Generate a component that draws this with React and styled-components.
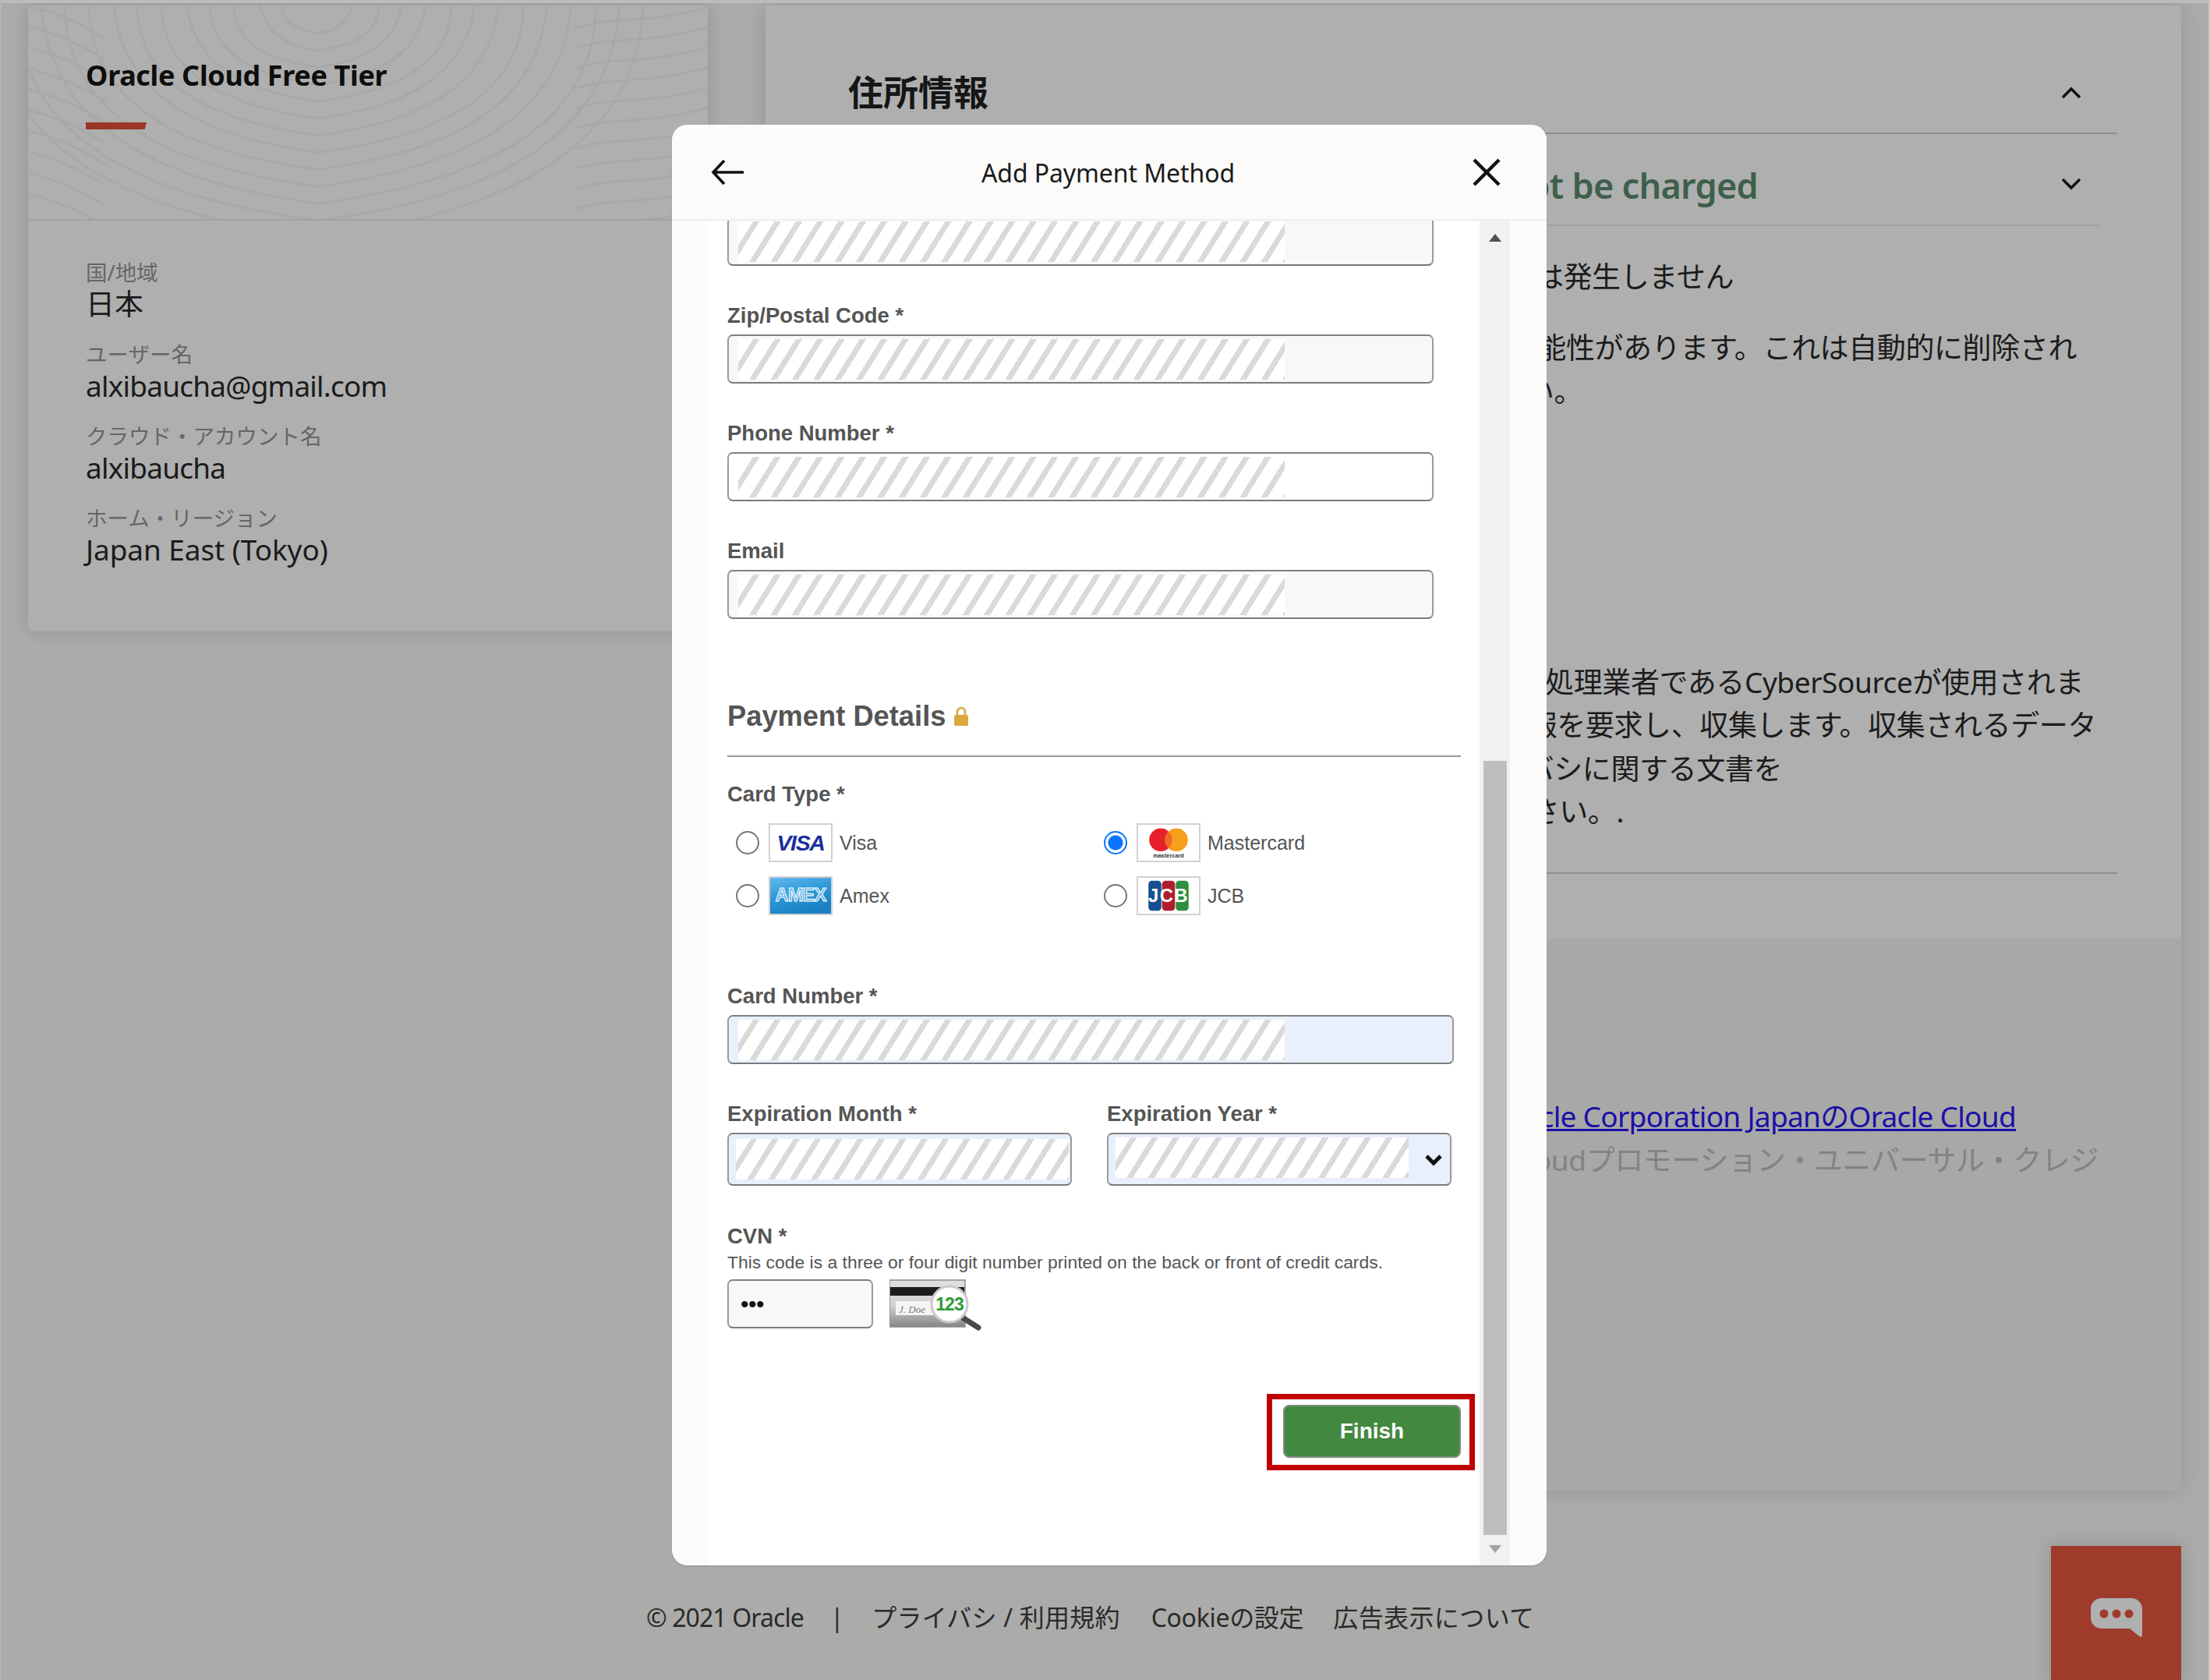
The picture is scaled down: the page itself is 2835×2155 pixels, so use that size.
import React from "react";
import styled, { createGlobalStyle } from "styled-components";

const Global = createGlobalStyle`
  html, body { margin: 0; padding: 0; background: #ababa9; }
  * { box-sizing: border-box; }
`;

const UI = `"Noto Sans", "Noto Sans CJK JP", sans-serif`;
const FORM = `"Liberation Sans", Arial, sans-serif`;
const CJK = `"Noto Sans", "Noto Sans CJK JP", sans-serif`;

const Page = styled.div`
  position: relative;
  width: 2835px;
  height: 2155px;
  overflow: hidden;
  background: #ababa9;
  border-top: 4px solid #bcbcbc;
  border-left: 2px solid #b4b4b4;
  border-right: 2px solid #c8c8c8;
  padding: 3px 35px 0 34px;
  font-family: ${UI};
`;
const Main = styled.main`
  display: flex;
  align-items: flex-start;
  gap: 74px;
`;
const LeftCard = styled.aside`
  width: 872px;
  height: 803px;
  flex: none;
  background: #afafaf;
  border-radius: 0 0 6px 6px;
  box-shadow: 0 0 22px rgba(0, 0, 0, 0.14);
`;
const CardHeader = styled.header`
  position: relative;
  height: 276px;
  padding: 62px 0 0 74px;
  border-bottom: 2px solid #a2a2a2;
  overflow: hidden;
`;
const Contours = styled.svg`
  position: absolute;
  inset: 0;
  width: 100%;
  height: 100%;
`;
const CardTitle = styled.h2`
  position: relative;
  margin: 0;
  font-size: 36px;
  line-height: 56px;
  font-weight: 700;
  letter-spacing: -0.35px;
  color: #0e0e0e;
`;
const RedBar = styled.div`
  position: relative;
  width: 78px;
  height: 9px;
  margin-top: 32px;
  background: #9b3727;
  clip-path: polygon(0 0, 100% 0, 97% 100%, 0 100%);
`;
const CardBody = styled.div`
  padding: 50px 0 0 74px;
  display: flex;
  flex-direction: column;
  gap: 24px;
`;
const Info = styled.div`
  display: flex;
  flex-direction: column;
`;
const InfoLabel = styled.span`
  font-size: 27.5px;
  line-height: 33px;
  color: #666;
`;
const InfoValue = styled.span`
  font-size: 37px;
  line-height: 48px;
  color: #1b1b1b;
  letter-spacing: ${(p) => p.$ls}px;
`;

const RightPanel = styled.section`
  width: 1816px;
  flex: none;
  box-shadow: 0 0 24px rgba(0, 0, 0, 0.13);
`;
const Upper = styled.div`
  height: 1197px;
  padding: 0 82px 0 106px;
  background: #afafaf;
`;
const Lower = styled.div`
  height: 708px;
  padding: 200px 82px 0 106px;
  background: #a8a8a6;
`;
const AddressRow = styled.div`
  height: 165px;
  padding: 80px 46px 20px 0;
  display: flex;
  align-items: center;
  justify-content: space-between;
  border-bottom: 2px solid #8f8f8f;
`;
const AddressTitle = styled.h2`
  margin: 0;
  font-size: 45px;
  line-height: 64px;
  font-weight: 700;
  color: #161616;
`;
const ChargeRow = styled.div`
  height: 118px;
  margin-right: 24px;
  padding: 35px 22px 19px 0;
  display: flex;
  align-items: center;
  justify-content: flex-end;
  border-bottom: 2px solid #a0a0a0;
  svg { margin-top: -5px; }
`;
const ChargeTitle = styled.h3`
  margin: 0 389px 0 0;
  font-size: 45px;
  line-height: 64px;
  font-weight: 600;
  white-space: nowrap;
  letter-spacing: -0.7px;
  color: #3e5f4c;
`;
const Para = styled.div`
  margin-top: ${(p) => p.$top}px;
`;
const Line = styled.div`
  font-family: ${CJK};
  font-size: 37px;
  line-height: ${(p) => p.$lh || 55.5}px;
  height: ${(p) => p.$lh || 55.5}px;
  color: ${(p) => p.$color || "#1c1c1c"};
  text-align: right;
  white-space: nowrap;
  letter-spacing: -0.4px;
  padding-right: ${(p) => p.$end}px;
`;
const Rule = styled.div`
  height: 2px;
  margin-top: ${(p) => p.$top}px;
  background: #8f8f8f;
`;
const LinkLine = styled.a`
  display: block;
  height: 56px;
  line-height: 56px;
  text-align: right;
  padding-right: 130px;
  font-size: 37px;
  white-space: nowrap;
  letter-spacing: -0.7px;
  color: #1c0fa8;
  span { text-decoration: underline; }
`;

const Footer = styled.footer`
  height: 200px;
  padding: 125px 0 0 793px;
  display: flex;
  align-items: center;
  font-family: ${CJK};
  font-size: 32px;
  line-height: 48px;
  color: #2a2a2a;
`;
const FootItem = styled.span`
  margin-left: ${(p) => p.$left}px;
  letter-spacing: ${(p) => p.$ls ?? -0.3}px;
  white-space: nowrap;
`;
const ChatButton = styled.button`
  position: absolute;
  left: 2629px;
  top: 1979px;
  width: 167px;
  height: 180px;
  padding: 67px 0 0 0;
  border: 0;
  display: flex;
  justify-content: center;
  align-items: flex-start;
  background: #9f3b2b;
  box-shadow: 0 0 22px rgba(0, 0, 0, 0.16);
`;

/* Modal */
const Modal = styled.div`
  position: absolute;
  left: 860px;
  top: 156px;
  width: 1122px;
  height: 1848px;
  border-radius: 20px;
  background: #fcfbf9;
  overflow: hidden;
  display: flex;
  flex-direction: column;
  box-shadow: 0 1px 2px rgba(0, 0, 0, 0.15);
`;
const ModalHead = styled.header`
  flex: none;
  height: 123px;
  padding: 0 59px 0 50px;
  display: flex;
  align-items: center;
  justify-content: space-between;
  border-bottom: 2px solid #efefee;
  position: relative;
  z-index: 1;
  background: #fcfbf9;
`;
const ModalTitle = styled.h1`
  margin: 2px 0 0;
  font-size: 32px;
  font-weight: 400;
  color: #1a1a1a;
  letter-spacing: -0.1px;
`;
const ModalBody = styled.div`
  flex: 1;
  min-height: 0;
  display: flex;
  padding: 0 47px;
`;
const Frame = styled.div`
  width: 989px;
  flex: none;
  background: #fff;
  overflow: hidden;
  padding-left: 24px;
  font-family: ${FORM};
  color: #555;
`;
const Form = styled.form`
  width: 941px;
  margin-top: -5px;
`;
const Scrollbar = styled.div`
  width: 39px;
  flex: none;
  display: flex;
  flex-direction: column;
  align-items: center;
  background: #f1f1f1;
`;
const ScrollTop = styled.div`
  height: 693px;
  padding-top: 17px;
  display: flex;
  justify-content: center;
  align-items: flex-start;
`;
const Thumb = styled.div`
  width: 30px;
  height: 993px;
  flex: none;
  background: #bebebe;
`;
const ScrollEnd = styled.div`
  flex: 1;
  padding-top: 13px;
  display: flex;
  justify-content: center;
  align-items: flex-start;
`;
const Arrow = styled.div`
  width: 0;
  height: 0;
  border-left: 8px solid transparent;
  border-right: 8px solid transparent;
  ${(p) =>
    p.$up
      ? "border-bottom: 10px solid #505050;"
      : "border-top: 10px solid #a3a3a3;"}
`;

const Group = styled.div`
  margin-top: ${(p) => p.$top ?? 47}px;
`;
const Label = styled.label`
  display: block;
  font-size: 27.5px;
  line-height: 34px;
  font-weight: 700;
  color: #555;
  white-space: nowrap;
`;
const Box = styled.div`
  width: ${(p) => p.$w || 906}px;
  height: ${(p) => p.$h || 63}px;
  margin-top: ${(p) => p.$mt ?? 7}px;
  padding: ${(p) => p.$pad || "4px 0 0 12px"};
  border: 2px solid #9a9a9a;
  border-top-color: #808080;
  border-bottom-color: #7a7a7a;
  border-radius: 7px;
  background: ${(p) => p.$bg || "#f8f8f8"};
  display: flex;
  align-items: flex-start;
  justify-content: space-between;
`;
const Hatch = styled.div`
  width: ${(p) => p.$w || 701}px;
  height: 52px;
  flex: none;
  background: repeating-linear-gradient(
    122deg,
    #fff 0,
    #fff 16.2px,
    #dadada 16.2px,
    #dadada 23.2px
  );
`;
const SectionHead = styled.div`
  margin-top: 103px;
  width: 941px;
  height: 74px;
  padding-bottom: 29px;
  display: flex;
  align-items: center;
  gap: 10px;
  border-bottom: 2px solid #999;
`;
const SectionTitle = styled.h2`
  margin: 0;
  font-size: 36.3px;
  line-height: 44px;
  font-weight: 700;
  color: #555;
`;
const CardGrid = styled.div`
  margin-top: 20px;
  padding-left: 11px;
  display: grid;
  grid-template-columns: 472px 1fr;
  row-gap: 18px;
`;
const CardOption = styled.div`
  display: flex;
  align-items: center;
  gap: 12px;
  height: 50px;
`;
const Radio = styled.span`
  width: 30px;
  height: 30px;
  border-radius: 50%;
  flex: none;
  background: ${(p) => (p.$on ? "radial-gradient(circle, #0b74ff 0 9px, #fff 10px)" : "#fff")};
  border: 2px solid ${(p) => (p.$on ? "#0b74ff" : "#767676")};
`;
const LogoBox = styled.span`
  width: 82px;
  height: 50px;
  flex: none;
  border: 2px solid #d2d2d2;
  background: #fff;
  display: block;
  svg { display: block; width: 100%; height: 100%; }
`;
const CardName = styled.span`
  margin-left: -3px;
  font-size: 25px;
  color: #555;
`;
const ExpRow = styled.div`
  margin-top: 47px;
  display: grid;
  grid-template-columns: 442px 442px;
  gap: 45px;
`;
const Chevron = styled.svg`
  margin: 21px 9px 0 0;
  flex: none;
`;
const Help = styled.p`
  margin: 1px 0 0;
  font-size: 22.9px;
  line-height: 30px;
  color: #555;
  white-space: nowrap;
`;
const CvnRow = styled.div`
  margin-top: 7px;
  display: flex;
  align-items: flex-start;
  gap: 21px;
`;
const Dots = styled.span`
  margin-top: 6px;
  font-size: 30px;
  line-height: 40px;
  letter-spacing: -0.5px;
  color: #111;
`;
const FinishRow = styled.div`
  margin-top: 95px;
  display: flex;
  justify-content: flex-end;
`;
const FinishWrap = styled.div`
  position: relative;
`;
const FinishButton = styled.button`
  width: 228px;
  height: 68px;
  border: 2px solid #7f8a7f;
  border-radius: 8px;
  background: #438841;
  color: #fff;
  font-family: ${FORM};
  font-size: 28px;
  font-weight: 700;
  padding: 0;
`;
const Callout = styled.div`
  position: absolute;
  left: -21px;
  top: -14px;
  width: 267px;
  height: 98px;
  border: 7px solid #c00000;
  pointer-events: none;
`;

function ContourArt() {
  const lines = [];
  const cx = 372;
  for (let i = 0; i < 13; i++) {
    const ry = 36 + i * 22;
    const rx = 46 + i * 31;
    const w = i % 3 === 1 ? 8 : -5;
    lines.push(
      <path
        key={"u" + i}
        d={`M ${cx - rx} -10 C ${cx - rx + w} ${ry * 0.72}, ${cx - rx * 0.42} ${ry * 0.92}, ${cx} ${ry} C ${cx + rx * 0.42} ${ry * 0.92}, ${cx + rx + w} ${ry * 0.72}, ${cx + rx} -10`}
      />
    );
  }
  for (let i = 0; i < 11; i++) {
    const y = 16 + i * 26;
    lines.push(<path key={"r" + i} d={`M 700 ${y + 14} C 750 ${y - 4}, 790 ${y + 10}, 872 ${y - 14}`} />);
  }
  for (let i = 0; i < 10; i++) {
    const y = 20 + i * 27;
    lines.push(<path key={"l" + i} d={`M 0 ${y - 20} C 30 ${y - 12}, 60 ${y - 2}, 100 ${y + 24}`} />);
  }
  return (
    <Contours viewBox="0 0 872 276" preserveAspectRatio="none" fill="none" stroke="#a8a8a8" strokeWidth="2.8">
      {lines}
    </Contours>
  );
}

const VisaLogo = () => (
  <svg viewBox="0 0 82 50">
    <text x="41" y="36" textAnchor="middle" fontFamily="Liberation Sans" fontWeight="700" fontStyle="italic" fontSize="31" letterSpacing="-1.5" fill="#1a2f9e">VISA</text>
  </svg>
);
const McLogo = () => (
  <svg viewBox="0 0 82 50">
    <circle cx="30" cy="21" r="16" fill="#e8202a" />
    <circle cx="52" cy="21" r="16" fill="#f79e1b" />
    <path d="M41 9.4a16 16 0 0 1 0 23.2a16 16 0 0 1 0-23.2z" fill="#f0682a" />
    <text x="41" y="46" textAnchor="middle" fontFamily="Liberation Sans" fontWeight="700" fontSize="8" fill="#333">mastercard</text>
  </svg>
);
const AmexLogo = () => (
  <svg viewBox="0 0 82 50" preserveAspectRatio="none">
    <defs>
      <linearGradient id="amexGrad" x1="0" y1="0" x2="0.4" y2="1">
        <stop offset="0" stopColor="#63b7ee" />
        <stop offset="0.5" stopColor="#2e9ad8" />
        <stop offset="1" stopColor="#1a80c4" />
      </linearGradient>
    </defs>
    <rect width="82" height="50" fill="url(#amexGrad)" />
    <text x="41" y="33" textAnchor="middle" fontFamily="Liberation Sans" fontWeight="700" fontSize="25" letterSpacing="-1" fill="#6bb8e8" stroke="#fff" strokeWidth="1">AMEX</text>
  </svg>
);
const JcbLogo = () => (
  <svg viewBox="0 0 82 50">
    <rect x="13" y="4" width="18" height="42" rx="5" fill="#14508f" />
    <rect x="32" y="4" width="18" height="42" rx="5" fill="#b01e2e" />
    <rect x="51" y="4" width="18" height="42" rx="5" fill="#2c8f3f" />
    <text x="41" y="34" textAnchor="middle" fontFamily="Liberation Sans" fontWeight="700" fontSize="26" letterSpacing="1.5" fill="#fff">JCB</text>
  </svg>
);
const CvnArt = () => (
  <svg width="120" height="66" viewBox="0 0 120 66" style={{ flex: "none", display: "block" }}>
    <defs>
      <linearGradient id="cvnCard" x1="0" y1="0" x2="0" y2="1">
        <stop offset="0" stopColor="#e0e0e0" />
        <stop offset="0.55" stopColor="#d0d0d0" />
        <stop offset="1" stopColor="#858585" />
      </linearGradient>
    </defs>
    <rect x="0" y="1" width="97" height="60" fill="url(#cvnCard)" stroke="#8c8c8c" strokeWidth="1.5" />
    <rect x="1" y="10" width="95" height="11" fill="#1c1c1c" />
    <rect x="8" y="28" width="52" height="18" fill="#f4f4f4" />
    <text x="12" y="43" fontFamily="Liberation Serif" fontStyle="italic" fontSize="13" fill="#777">J. Doe</text>
    <line x1="92" y1="48" x2="114" y2="62" stroke="#4a4a4a" strokeWidth="7" strokeLinecap="round" />
    <circle cx="77" cy="32" r="23" fill="#fff" stroke="#c9c9c9" strokeWidth="3" />
    <text x="77" y="40" textAnchor="middle" fontFamily="Liberation Sans" fontWeight="700" fontSize="23" letterSpacing="-1" fill="#2f9a33">123</text>
  </svg>
);

const Field = ({ label, first, bg, top, w, hw }) => (
  <Group $top={first ? 0 : top}>
    {label && <Label>{label}</Label>}
    <Box $mt={first ? 0 : 7} $bg={bg} $w={w}>
      <Hatch $w={hw} />
    </Box>
  </Group>
);

const cards = [
  { name: "Visa", Logo: VisaLogo },
  { name: "Mastercard", Logo: McLogo, on: true },
  { name: "Amex", Logo: AmexLogo },
  { name: "JCB", Logo: JcbLogo },
];

const info = [
  ["国/地域", "日本", 0],
  ["ユーザー名", "alxibaucha@gmail.com", -0.8],
  ["クラウド・アカウント名", "alxibaucha", -0.8],
  ["ホーム・リージョン", "Japan East (Tokyo)", -0.1],
];

export default function App() {
  return (
    <Page>
      <Global />
      <Main>
        <LeftCard>
          <CardHeader>
            <ContourArt />
            <CardTitle>Oracle Cloud Free Tier</CardTitle>
            <RedBar />
          </CardHeader>
          <CardBody>
            {info.map(([k, v, ls]) => (
              <Info key={k}>
                <InfoLabel>{k}</InfoLabel>
                <InfoValue $ls={ls}>{v}</InfoValue>
              </Info>
            ))}
          </CardBody>
        </LeftCard>
        <RightPanel>
          <Upper>
            <AddressRow>
              <AddressTitle>住所情報</AddressTitle>
              <svg width="26" height="16" viewBox="0 0 26 16" fill="none" stroke="#111" strokeWidth="3.4"><path d="M2 14 13 3l11 11" /></svg>
            </AddressRow>
            <ChargeRow>
              <ChargeTitle>You will not be charged</ChargeTitle>
              <svg width="26" height="16" viewBox="0 0 26 16" fill="none" stroke="#111" strokeWidth="3.4"><path d="M2 2l11 11L24 2" /></svg>
            </ChargeRow>
            <Para $top={37}>
              <Line $end={492}>料金は発生しません</Line>
            </Para>
            <Para $top={35}>
              <Line $end={52} $lh={56}>可能性があります。これは自動的に削除され</Line>
              <Line $end={686} $lh={56}>い。</Line>
            </Para>
            <Para $top={317}>
              <Line $end={43}>処理業者であるCyberSourceが使用されま</Line>
              <Line $end={27}>報を要求し、収集します。収集されるデータ</Line>
              <Line $end={430}>バシに関する文書を</Line>
              <Line $end={633}>さい。. </Line>
            </Para>
            <Rule $top={50} />
          </Upper>
          <Lower>
            <LinkLine><span>Oracle Corporation JapanのOracle Cloud</span></LinkLine>
            <Line $end={24} $color="#838383">Oracle Cloudプロモーション・ユニバーサル・クレジ</Line>
          </Lower>
        </RightPanel>
      </Main>
      <Footer>
        <FootItem $left={0} $ls={-0.9}>© 2021 Oracle</FootItem>
        <FootItem $left={34}>|</FootItem>
        <FootItem $left={36} $ls={0.2}>プライバシ / 利用規約</FootItem>
        <FootItem $left={40}>Cookieの設定</FootItem>
        <FootItem $left={38} $ls={0.4}>広告表示について</FootItem>
      </Footer>
      <ChatButton aria-label="chat">
        <svg width="66" height="50" viewBox="0 0 66 50">
          <path d="M14 0h38a14 14 0 0 1 14 14v34a2 2 0 0 1-3.5 1L50 39H14A14 14 0 0 1 0 25V14A14 14 0 0 1 14 0z" fill="#b0b0b0" />
          <circle cx="17" cy="20" r="5.5" fill="#9f3b2b" />
          <circle cx="33" cy="20" r="5.5" fill="#9f3b2b" />
          <circle cx="49" cy="20" r="5.5" fill="#9f3b2b" />
        </svg>
      </ChatButton>
      <Modal>
        <ModalHead>
          <svg width="42" height="34" viewBox="0 0 42 34" fill="none" stroke="#111" strokeWidth="3.6"><path d="M42 17H3M17 2 3 17l14 15" /></svg>
          <ModalTitle>Add Payment Method</ModalTitle>
          <svg width="36" height="36" viewBox="0 0 36 36" fill="none" stroke="#111" strokeWidth="4.4"><path d="M2 2l32 32M34 2 2 34" /></svg>
        </ModalHead>
        <ModalBody>
          <Frame>
            <Form as="div">
              <Field first />
              <Field label="Zip/Postal Code *" />
              <Field label="Phone Number *" bg="#fff" />
              <Field label="Email" />
              <SectionHead>
                <SectionTitle>Payment Details</SectionTitle>
                <svg width="20" height="26" viewBox="0 0 20 26"><path d="M5 11V7a5 5 0 0 1 10 0v4" fill="none" stroke="#d9a93f" strokeWidth="2.6" /><rect x="1" y="11" width="18" height="14" rx="2" fill="#d9a93f" /></svg>
              </SectionHead>
              <Group $top={31}>
                <Label>Card Type *</Label>
                <CardGrid>
                  {cards.map(({ name, Logo, on }) => (
                    <CardOption key={name}>
                      <Radio $on={on} />
                      <LogoBox><Logo /></LogoBox>
                      <CardName>{name}</CardName>
                    </CardOption>
                  ))}
                </CardGrid>
              </Group>
              <Field label="Card Number *" top={87} bg="#e8f0fe" w={932} />
              <ExpRow>
                <div>
                  <Label>Expiration Month *</Label>
                  <Box $w={442} $h={68} $mt={7} $bg="#e8f0fe" $pad="6px 0 0 9px">
                    <Hatch $w={427} />
                  </Box>
                </div>
                <div>
                  <Label>Expiration Year *</Label>
                  <Box $w={442} $h={68} $mt={7} $bg="#e8f0fe" $pad="4px 0 0 9px">
                    <Hatch $w={376} />
                    <Chevron width="24" height="16" viewBox="0 0 24 16" fill="none" stroke="#111" strokeWidth="5"><path d="M3 3l9 9 9-9" /></Chevron>
                  </Box>
                </div>
              </ExpRow>
              <Group $top={48}>
                <Label>CVN *</Label>
                <Help>This code is a three or four digit number printed on the back or front of credit cards.</Help>
                <CvnRow>
                  <Box $w={187} $mt={0} $pad="4px 0 0 15px">
                    <Dots>•••</Dots>
                  </Box>
                  <CvnArt />
                </CvnRow>
              </Group>
              <FinishRow>
                <FinishWrap>
                  <FinishButton type="button">Finish</FinishButton>
                  <Callout />
                </FinishWrap>
              </FinishRow>
            </Form>
          </Frame>
          <Scrollbar>
            <ScrollTop><Arrow $up /></ScrollTop>
            <Thumb />
            <ScrollEnd><Arrow /></ScrollEnd>
          </Scrollbar>
        </ModalBody>
      </Modal>
    </Page>
  );
}
